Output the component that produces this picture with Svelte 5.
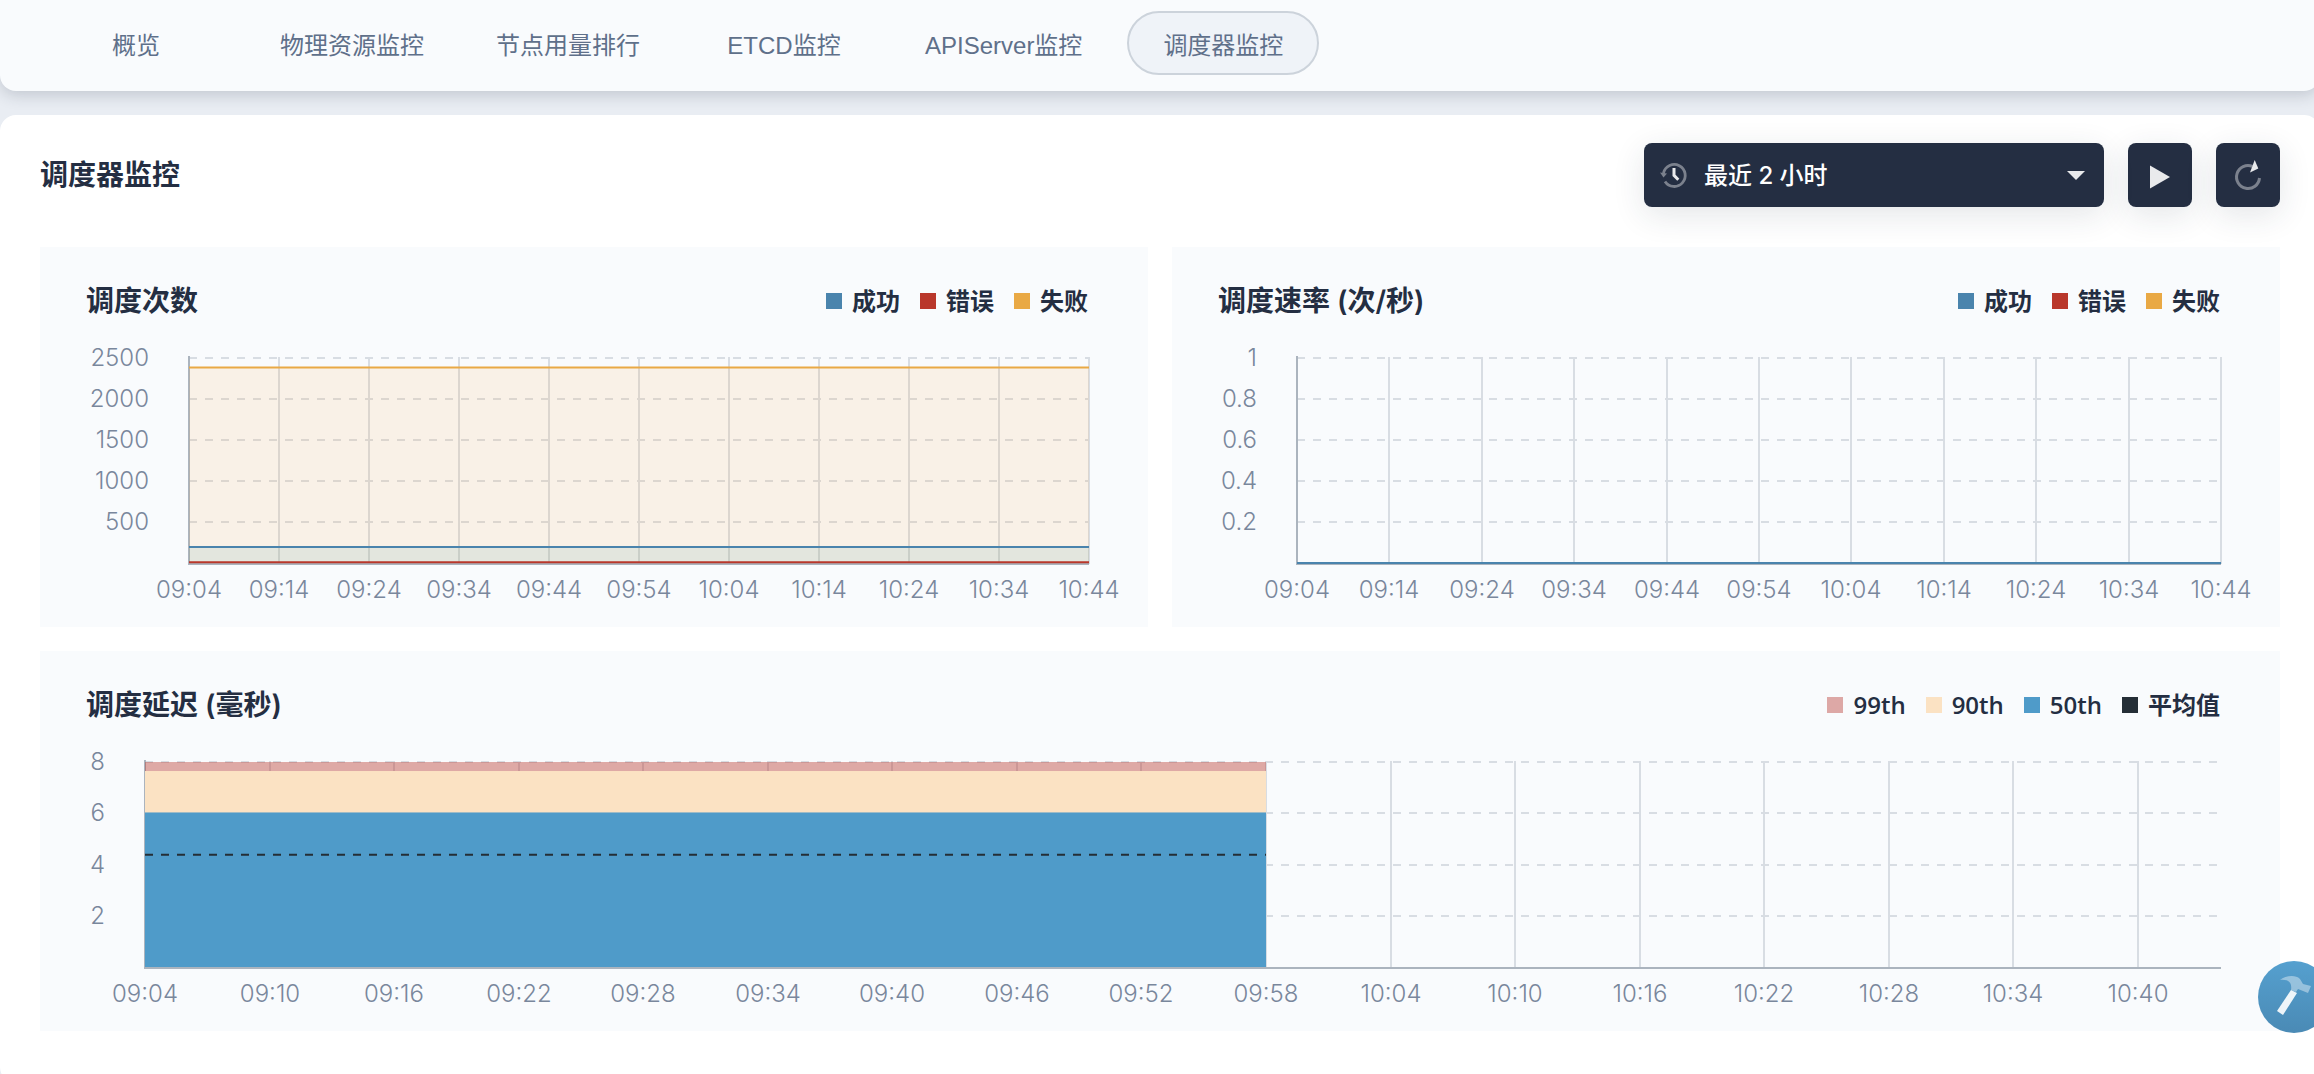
<script>
  let tabs = ['概览', '物理资源监控', '节点用量排行', 'ETCD监控', 'APIServer监控', '调度器监控'];
  let activeTab = $state('调度器监控');

  let ranges = ['最近 2 小时', '最近 3 小时', '最近 5 小时', '最近 12 小时'];
  let range = $state('最近 2 小时');

  // plot area inside each chart svg
  const TOP = 15;
  const BOTTOM = 221;
  const RIGHT = 59;

  function times(step, count) {
    return Array.from({ length: count }, (_, i) => {
      const t = 9 * 60 + 4 + i * step;
      const h = String(Math.floor(t / 60)).padStart(2, '0');
      const m = String(t % 60).padStart(2, '0');
      return { at: (i * step) / 100, label: `${h}:${m}` };
    });
  }

  const requestLegend = [
    { name: '成功', color: '#4a84ad' },
    { name: '错误', color: '#b9372b' },
    { name: '失败', color: '#e9a945' }
  ];

  const charts = [
    {
      id: 'count',
      title: '调度次数',
      legend: requestLegend,
      left: 149,
      max: 2500,
      yTicks: [2500, 2000, 1500, 1000, 500],
      xTicks: times(10, 11),
      end: 1,
      series: [
        { value: 2385, line: '#e9a945', fill: '#fc9e28', opacity: 0.1 },
        { value: 206, line: '#4a84ad', fill: '#4a9aa0', opacity: 0.12 },
        { value: 20, line: '#b9372b', fill: '#b9372b', opacity: 0.1 }
      ]
    },
    {
      id: 'rate',
      title: '调度速率 (次/秒)',
      legend: requestLegend,
      left: 125,
      max: 1,
      yTicks: [1, 0.8, 0.6, 0.4, 0.2],
      xTicks: times(10, 11),
      end: 1,
      series: [{ value: 0.005, line: '#4a84ad', fill: 'none', opacity: 1 }]
    },
    {
      id: 'latency',
      title: '调度延迟 (毫秒)',
      wide: true,
      legend: [
        { name: '99th', color: '#dda8a6' },
        { name: '90th', color: '#fbe2c3' },
        { name: '50th', color: '#4f9bc9' },
        { name: '平均值', color: '#242e36' }
      ],
      left: 105,
      max: 8,
      yTicks: [8, 6, 4, 2],
      xTicks: times(6, 17),
      end: 0.54,
      series: [
        { value: 8, fill: '#b9372b', opacity: 0.42 },
        { value: 7.65, fill: '#fbe2c3', opacity: 1 },
        { value: 6.04, fill: '#4f9bc9', opacity: 1 },
        { value: 4.4, line: '#242e36', fill: 'none', dashed: true, opacity: 1 }
      ]
    }
  ];

  let widths = $state({ count: 1108, rate: 1108, latency: 2240 });

  function yPos(chart, value) {
    return BOTTOM - (value / chart.max) * (BOTTOM - TOP);
  }

  // grid lines sit on whole pixels
  function yGrid(chart, value) {
    return Math.floor(yPos(chart, value));
  }

  function xPos(chart, at) {
    return Math.round(chart.left + at * (widths[chart.id] - RIGHT - chart.left));
  }
</script>

<div class="page">
  <nav class="tabs">
    {#each tabs as tab}
      <button type="button" class="tab" class:active={tab === activeTab} onclick={() => (activeTab = tab)}>
        {tab}
      </button>
    {/each}
  </nav>

  <main class="panel">
    <header class="panel-header">
      <h1>调度器监控</h1>

      <div class="controls">
        <div class="range">
          <svg class="range-icon" width="32" height="32" viewBox="0 0 32 32" aria-hidden="true">
            <path d="M5.500 14a11 11 0 1 1 1.500 8.500" fill="none" stroke="#fff" stroke-opacity="0.4" stroke-width="2.800" />
            <path d="M2 13.500l7 1-3.500 4z" fill="#fff" fill-opacity="0.4" />
            <path d="M16 9v7.300l4.300 4.400" fill="none" stroke="#e9eaec" stroke-width="3" />
          </svg>
          <select aria-label="时间范围" bind:value={range}>
            {#each ranges as item}
              <option value={item}>{item}</option>
            {/each}
          </select>
          <svg class="range-caret" width="18" height="9" viewBox="0 0 18 9" aria-hidden="true">
            <path d="M0 0h18l-9 9z" fill="#e9eaec" />
          </svg>
        </div>

        <button type="button" class="icon-btn" aria-label="开始实时刷新">
          <svg width="32" height="32" viewBox="0 0 32 32" aria-hidden="true">
            <path d="M6 6.500v23l20-11.500z" fill="#e9eaec" />
          </svg>
        </button>
        <button type="button" class="icon-btn" aria-label="刷新">
          <svg width="32" height="32" viewBox="0 0 32 32" aria-hidden="true">
            <path d="M20.500 7.400a11.500 11.500 0 1 0 7 11.600" fill="none" stroke="#fff" stroke-opacity="0.4" stroke-width="3" />
            <path d="M22.700 1l3.600 8.500-8.300 4z" fill="#e9eaec" />
          </svg>
        </button>
      </div>
    </header>

    <div class="charts">
      {#each charts as chart (chart.id)}
        <section class="card" class:wide={chart.wide}>
          <div class="card-header">
            <h2>{chart.title}</h2>
            <ul class="legend">
              {#each chart.legend as item}
                <li><i style="background: {item.color}"></i>{item.name}</li>
              {/each}
            </ul>
          </div>

          <div class="plot" bind:clientWidth={widths[chart.id]}>
            <svg width="100%" height="284" role="img" aria-label={chart.title}>
              <g class="grid">
                {#each chart.yTicks as tick}
                  <line class="dashed" x1={chart.left} x2={xPos(chart, 1)} y1={yGrid(chart, tick)} y2={yGrid(chart, tick)} />
                {/each}
                {#each chart.xTicks.slice(1) as tick}
                  <line x1={xPos(chart, tick.at)} x2={xPos(chart, tick.at)} y1={TOP - 1} y2={BOTTOM} />
                {/each}
              </g>

              <g class="axis">
                <line x1={chart.left} x2={chart.left} y1={TOP - 2} y2={BOTTOM} />
                <line x1={chart.left - 1} x2={xPos(chart, 1)} y1={BOTTOM} y2={BOTTOM} />
              </g>

              {#each chart.series as s}
                <rect
                  x={chart.left}
                  y={yPos(chart, s.value)}
                  width={xPos(chart, chart.end) - chart.left}
                  height={Math.max(BOTTOM - 1 - yPos(chart, s.value), 0)}
                  fill={s.fill}
                  fill-opacity={s.opacity}
                />
              {/each}
              {#each chart.series.filter((s) => s.line) as s}
                <line
                  class="series"
                  class:dashed={s.dashed}
                  x1={chart.left}
                  x2={xPos(chart, chart.end)}
                  y1={yPos(chart, s.value)}
                  y2={yPos(chart, s.value)}
                  stroke={s.line}
                />
              {/each}

              {#each chart.yTicks as tick}
                <text x={chart.left - 40} y={yGrid(chart, tick) + 8} text-anchor="end">{tick}</text>
              {/each}
              {#each chart.xTicks as tick}
                <text x={xPos(chart, tick.at)} y="255" text-anchor="middle">{tick.label}</text>
              {/each}
            </svg>
          </div>
        </section>
      {/each}
    </div>
  </main>

  <button type="button" class="toolbox" aria-label="工具箱">
    <svg width="36" height="44" viewBox="0 0 36 44" aria-hidden="true">
      <path d="M4 5C9 1 19-1 24 4l3 5 8 2-3 7-10-4-2 3-5-2C16 9 14 4 4 5z" fill="#fff" fill-opacity="0.4" />
      <path d="M15 15l6 3L7 40l-6-4z" fill="#fff" fill-opacity="0.9" />
    </svg>
  </button>
</div>

<style>
  :global(body) {
    margin: 0;
    background: #e9edf3;
  }

  .page {
    font-family: Inter, 'Noto Sans CJK SC', sans-serif;
    color: #242e42;
    overflow-x: clip;
  }

  button,
  select {
    font-family: inherit;
    cursor: pointer;
  }

  .tabs {
    display: flex;
    gap: 24px;
    margin-right: -6px;
    padding: 11px 40px 16px;
    background: #f9fbfd;
    border-radius: 0 0 16px 16px;
    box-shadow: 0 4px 16px rgba(36, 46, 66, 0.2);
  }

  .tab {
    box-sizing: border-box;
    min-width: 192px;
    height: 64px;
    padding: 0 19px;
    border: 2px solid transparent;
    border-radius: 32px;
    background: none;
    color: #5f708a;
    font-family: 'Liberation Sans', 'Noto Sans CJK SC', sans-serif;
    font-size: 24px;
    white-space: nowrap;
  }

  .tab.active {
    background: #eff3f8;
    border-color: #ccd3db;
  }

  .panel {
    margin: 24px -6px 0 0;
    padding: 28px 40px 52px;
    background: #fff;
    border-radius: 16px;
  }

  .panel-header {
    display: flex;
    align-items: center;
    justify-content: space-between;
    margin-bottom: 40px;
  }

  h1,
  h2 {
    margin: 0;
    font-size: 28px;
    font-weight: 600;
    line-height: 42px;
  }

  .controls {
    display: flex;
    gap: 24px;
  }

  .range,
  .icon-btn {
    background: #242e42;
    border-radius: 8px;
    box-shadow: 0 8px 32px rgba(36, 46, 66, 0.12);
  }

  .range {
    position: relative;
    width: 460px;
    height: 64px;
  }

  .range select {
    width: 100%;
    height: 100%;
    padding: 0 60px;
    border: none;
    border-radius: 8px;
    background: none;
    appearance: none;
    color: #fff;
    font-size: 24px;
    font-weight: 500;
  }

  .range option {
    color: #242e42;
  }

  .range-icon,
  .range-caret {
    position: absolute;
    pointer-events: none;
  }

  .range-icon {
    left: 14px;
    top: 16px;
  }

  .range-caret {
    right: 19px;
    top: 28px;
  }

  .icon-btn {
    display: flex;
    align-items: center;
    justify-content: center;
    width: 64px;
    height: 64px;
    padding: 0;
    border: none;
  }

  .charts {
    display: grid;
    grid-template-columns: repeat(2, minmax(0, 1fr));
    gap: 24px;
  }

  .card {
    background: #f9fbfd;
  }

  .card.wide {
    grid-column: 1 / -1;
  }

  .card-header {
    display: flex;
    align-items: center;
    justify-content: space-between;
    padding: 33px 60px 21px 46px;
  }

  .legend {
    display: flex;
    gap: 20px;
    margin: 0;
    padding: 0;
    list-style: none;
    font-family: 'Open Sans', 'Noto Sans CJK SC', sans-serif;
    font-size: 24px;
    font-weight: 600;
    line-height: 42px;
  }

  .legend li {
    display: flex;
    align-items: center;
    gap: 10px;
  }

  .legend i {
    width: 16px;
    height: 16px;
  }

  .plot svg {
    display: block;
  }

  .plot text {
    fill: #79879c;
    font-size: 24px;
    font-weight: 300;
  }

  .grid line {
    stroke: #d8dde3;
    stroke-width: 2;
  }

  .axis line {
    stroke: #abb4be;
    stroke-width: 2;
  }

  .series {
    stroke-width: 2;
  }

  .dashed {
    stroke-dasharray: 8 8;
  }

  .toolbox {
    position: fixed;
    right: -16px;
    bottom: 41px;
    display: flex;
    align-items: center;
    justify-content: center;
    width: 72px;
    height: 72px;
    padding: 0;
    border: none;
    border-radius: 50%;
    background: linear-gradient(#55a0cf, #4a8ab5);
  }
</style>
